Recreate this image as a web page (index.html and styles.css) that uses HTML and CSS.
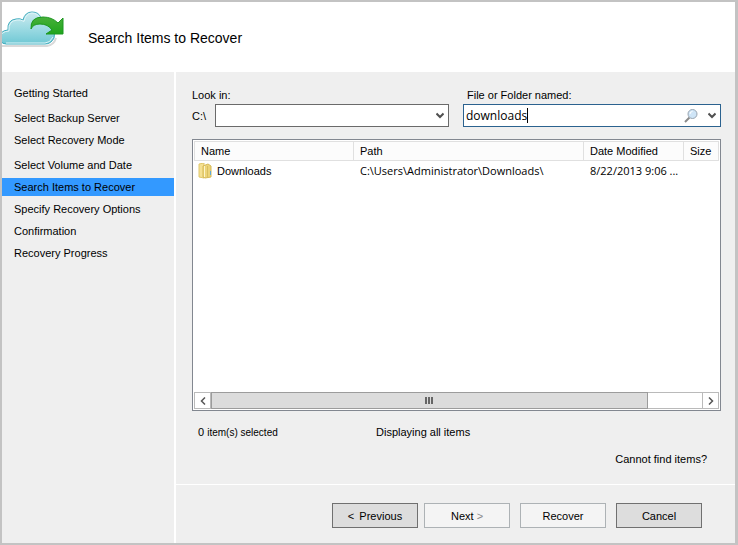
FILE: index.html
```html
<!DOCTYPE html>
<html lang="en">
<head>
<meta charset="utf-8">
<title>Search Items to Recover</title>
<link rel="stylesheet" href="styles.css">
</head>
<body>
<div class="wizard">
  <header class="banner">
    <svg class="logo" width="62" height="40" viewBox="0 0 62 40" aria-hidden="true">
      <defs>
        <linearGradient id="cloud" x1="0" y1="0" x2="0" y2="1">
          <stop offset="0" stop-color="#cdebf0"/>
          <stop offset="0.5" stop-color="#9edbe3"/>
          <stop offset="1" stop-color="#6fc8d4"/>
        </linearGradient>
        <linearGradient id="arrow" x1="0" y1="0" x2="0" y2="1">
          <stop offset="0" stop-color="#48b03a"/>
          <stop offset="1" stop-color="#1fa51c"/>
        </linearGradient>
      </defs>
      <path d="M0 35H45Q52 34 54 27" fill="none" stroke="#d9d9d9" stroke-width="2"/>
      <path d="M-1 22Q2 19 6 19Q5 9 14 8Q18 7 21 9Q23 1 30 1Q37 1 39 7Q50 7 50 18Q54 22 52 27Q49 33 43 33H4Q0 33 -1 30Z" fill="url(#cloud)" stroke="#3fabbd"/>
      <path d="M0 22.500Q3 20 7 20Q6 10 15 9Q19 8.500 22 10.500Q24 2 30 2Q36 2 38 8M51 26Q48 32 43 32H4" fill="none" stroke="#dff5f8"/>
      <path d="M29 18Q28 6 41 6Q50 6 56 12L61 7V23H44L50 19Q46 13 38 13Q31 13 29 18Z" fill="url(#arrow)" stroke="#1d9720"/>
    </svg>
    <h1>Search Items to Recover</h1>
  </header>

  <div class="body">
    <nav class="steps" aria-label="Wizard steps">
      <ol>
        <li>Getting Started</li>
        <li class="group">Select Backup Server</li>
        <li>Select Recovery Mode</li>
        <li class="group">Select Volume and Date</li>
        <li class="current" aria-current="step">Search Items to Recover</li>
        <li>Specify Recovery Options</li>
        <li>Confirmation</li>
        <li>Recovery Progress</li>
      </ol>
    </nav>

    <div class="content">
      <main class="page">
        <div class="filters">
          <div class="field look-in">
            <label for="look-in">Look in:</label>
            <div class="row">
              <span class="drive">C:\</span>
              <div class="combo">
                <select id="look-in"><option></option></select>
                <svg class="chevron" width="8" height="7" viewBox="0 0 8 7" aria-hidden="true"><path d="M0.500 1.500L4 5L7.500 1.500" fill="none" stroke="#505050" stroke-width="2"/></svg>
              </div>
            </div>
          </div>
          <div class="field named">
            <label for="named">File or Folder named:</label>
            <div class="combo search">
              <input id="named" type="text" value="downloads" size="9">
              <span class="caret"></span>
              <button class="tool" type="button" aria-label="Search">
                <svg width="14" height="14" viewBox="0 0 14 14" aria-hidden="true">
                  <path d="M1 13L5.500 8.500" stroke="#8a8a8a" stroke-width="2"/>
                  <circle cx="8.500" cy="5" r="4.500" fill="#cfe5f7" stroke="#98a4b0"/>
                  <path d="M6 5Q6 2.500 8.500 2.500" fill="none" stroke="#fff"/>
                </svg>
              </button>
              <button class="tool" type="button" aria-label="Show history">
                <svg width="8" height="7" viewBox="0 0 8 7" aria-hidden="true"><path d="M0.500 1.500L4 5L7.500 1.500" fill="none" stroke="#505050" stroke-width="2"/></svg>
              </button>
            </div>
          </div>
        </div>

        <div class="list">
          <table>
            <colgroup><col class="c-name"><col class="c-path"><col class="c-date"><col class="c-size"></colgroup>
            <thead>
              <tr><th>Name</th><th>Path</th><th>Date Modified</th><th>Size</th></tr>
            </thead>
            <tbody>
              <tr>
                <td class="name"><span class="file">
                  <svg width="14" height="16" viewBox="0 0 14 16" aria-hidden="true">
                    <path d="M1 1L6 0V15L1 14Z" fill="#f5e193" stroke="#e0c76c"/>
                    <path d="M5 3L10 1L13 3V14L7 15L5 14Z" fill="#ecd47a" stroke="#d6b957"/>
                    <path d="M6.500 3V14" stroke="#fdf5cc"/>
                    <path d="M9.500 3V14" stroke="#d9bf60"/>
                    <path d="M12.500 8V12" stroke="#5fa9d8"/>
                  </svg>Downloads</span></td>
                <td>C:\Users\Administrator\Downloads\</td>
                <td>8/22/2013 9:06 ...</td>
                <td></td>
              </tr>
            </tbody>
          </table>
          <div class="scrollbar">
            <button type="button" aria-label="Scroll left"><svg width="6" height="8" viewBox="0 0 6 8" aria-hidden="true"><path d="M5 0.500L1.500 4L5 7.500" fill="none" stroke="#555" stroke-width="1.500"/></svg></button>
            <div class="track"><div class="thumb"><i></i><i></i><i></i></div></div>
            <button type="button" aria-label="Scroll right"><svg width="6" height="8" viewBox="0 0 6 8" aria-hidden="true"><path d="M1 0.500L4.500 4L1 7.500" fill="none" stroke="#555" stroke-width="1.500"/></svg></button>
          </div>
        </div>

        <div class="status">
          <span class="selected">0 <small>item(s) selected</small></span>
          <span>Displaying all items</span>
        </div>
        <a class="help" href="#help">Cannot find items?</a>
      </main>

      <footer class="actions">
        <button class="strong" type="button"><span class="angle">&lt;</span> Previous</button>
        <button type="button">Next <span class="dim">&gt;</span></button>
        <button class="apart" type="button">Recover</button>
        <button class="strong apart" type="button">Cancel</button>
      </footer>
    </div>
  </div>
</div>
</body>
</html>
```
FILE: styles.css
```css
* {
  box-sizing: border-box;
}

body {
  margin: 0;
  color: #000;
  font: 11px/18px "Liberation Sans", Arial, sans-serif;
}

button,
input,
select {
  margin: 0;
  padding: 0;
  border: 0;
  border-radius: 0;
  outline: 0;
  background: none;
  color: inherit;
  font: inherit;
  appearance: none;
}

svg {
  display: block;
  flex: none;
}

.wizard {
  display: flex;
  flex-direction: column;
  min-height: 100vh;
  border: 2px solid #c3c3c3;
  border-right-width: 3px;
  background: #efefef;
}

.banner {
  display: flex;
  gap: 24px;
  height: 70px;
  padding-top: 9px;
  background: #fff;
}

.banner h1 {
  margin: 18px 0 0;
  font-size: 14px;
  font-weight: 400;
  line-height: 18px;
}

.body {
  display: flex;
  flex: 1;
}

.steps {
  flex: none;
  width: 174px;
  border-right: 2px solid #fff;
}

.steps ol {
  display: flex;
  flex-direction: column;
  gap: 4px;
  margin: 0;
  padding: 12px 0 0;
  list-style: none;
}

.steps li {
  padding-left: 12px;
}

.steps .group {
  margin-top: 3px;
}

.steps .current {
  background: #3399ff;
}

.content {
  display: flex;
  flex: 1;
  flex-direction: column;
  min-width: 0;
}

.page {
  display: flex;
  flex: 1;
  flex-direction: column;
  padding: 14px 14px 16px 16px;
}

.filters {
  display: flex;
  gap: 14px;
}

.field {
  min-width: 0;
}

.field label {
  display: block;
}

.look-in {
  flex: 257;
}

.named {
  flex: 258;
}

.named label {
  padding-left: 4px;
}

.row {
  display: flex;
  align-items: center;
}

.drive {
  width: 23px;
}

.combo {
  display: flex;
  flex: 1;
  align-items: center;
  position: relative;
  height: 23px;
  border: 1px solid #6a6a6a;
  background: #fff;
}

.combo select {
  width: 100%;
  height: 100%;
}

.chevron {
  position: absolute;
  right: 4px;
  pointer-events: none;
}

.search {
  padding: 0 4px 0 2px;
  border-color: #2b628f;
}

.search input {
  field-sizing: content;
  font-family: "Open Sans", sans-serif;
  font-size: 12px;
}

.caret {
  width: 1px;
  height: 15px;
  margin-right: auto;
  background: #000;
}

.tool + .tool {
  margin-left: 10px;
}

.list {
  display: flex;
  flex: 1;
  flex-direction: column;
  justify-content: space-between;
  margin-top: 12px;
  padding: 1px;
  border: 1px solid #828790;
  background: #fff;
}

table {
  width: 100%;
  border-collapse: separate;
  border-spacing: 0;
  table-layout: fixed;
}

.c-name {
  width: 160px;
}

.c-date {
  width: 100px;
}

.c-size {
  width: 35px;
}

th,
td {
  padding: 0 0 0 6px;
  font-weight: 400;
  text-align: left;
  white-space: nowrap;
}

th {
  height: 20px;
  border: 1px solid #e0e0e0;
  border-left-width: 0;
  background: #fcfcfc;
}

th:first-child {
  border-left-width: 1px;
}

td {
  height: 20px;
  font-family: "Open Sans", sans-serif;
}

td.name {
  padding-left: 4px;
  font-family: inherit;
}

.file {
  display: flex;
  align-items: center;
  gap: 5px;
}

.scrollbar {
  display: flex;
  height: 17px;
}

.scrollbar button {
  display: flex;
  align-items: center;
  justify-content: center;
  width: 17px;
  border: 1px solid #bababa;
}

.track {
  flex: 1;
  border: solid #bababa;
  border-width: 1px 0;
}

.thumb {
  display: flex;
  align-items: center;
  justify-content: center;
  gap: 1px;
  width: 89%;
  height: 17px;
  margin-top: -1px;
  border: 1px solid #9c9c9c;
  background: #dcdcdc;
}

.thumb i {
  width: 2px;
  height: 7px;
  background: #666;
}

.status {
  display: flex;
  margin-top: 12px;
  padding-left: 6px;
}

.selected {
  width: 178px;
}

.selected small {
  font-size: 10px;
  line-height: 1;
}

.help {
  align-self: flex-end;
  margin: 9px 14px 0 0;
  color: inherit;
  text-decoration: none;
}

.actions {
  display: flex;
  justify-content: flex-end;
  gap: 6px;
  padding: 18px 33px 15px 0;
  border-top: 1px solid #fff;
}

.actions button {
  width: 86px;
  height: 25px;
  border: 1px solid #adb2b5;
  background: #f4f4f4;
}

.actions .apart {
  margin-left: 4px;
}

.actions .strong {
  border-color: #707070;
  background: #ddd;
}

.angle {
  margin-right: 2px;
}

.dim {
  color: #888;
}
```
